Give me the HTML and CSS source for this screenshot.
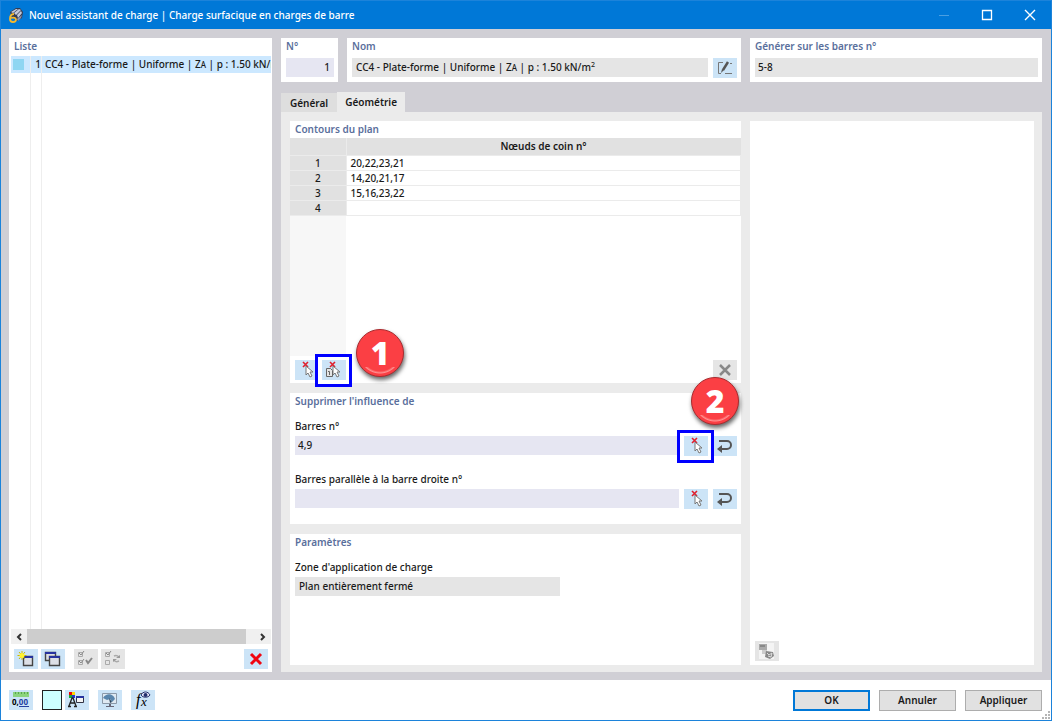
FILE: index.html
```html
<!DOCTYPE html>
<html lang="fr">
<head>
    <meta charset="UTF-8">
    <title>Nouvel assistant de charge</title>
    <link rel="stylesheet" href="styles.css">
</head>
<body>

<!-- shared icons -->
<svg class="defs" width="0" height="0" aria-hidden="true">
    <symbol id="pick" viewBox="0 0 24 20">
        <path d="M8 2l5 5M13 2l-5 5" stroke="#e01f2d" stroke-width="1.6"/>
        <path d="M11 6v9l2-2 2 4 2-1-2-4h3z" fill="#fff" stroke="#777" stroke-width="1"/>
    </symbol>
    <symbol id="back" viewBox="0 0 24 20">
        <path d="M6 5h8a4 4 0 0 1 0 8H6" fill="none" stroke="#555" stroke-width="2"/>
        <path d="M9 9l-5 4 5 4z" fill="#555"/>
    </symbol>
</svg>

<div class="window">
    <header class="titlebar">
        <svg class="logo" width="16" height="16" viewBox="0 0 16 16">
            <path d="M2 5l6-4h4l3 4-1 6-5 3-5-4z" fill="#343b52"/>
            <path d="M3 5l5-3h2L5 6zM6 6l5-4 2 1-5 5zM9 8l4-4 1 2-4 5z" fill="#c3c9da"/>
            <path d="M9 12l5-4-1 3-3 3z" fill="#8b93ad"/>
            <path d="M6 7C3 7 2 9 2 12c0 2 1 3 3 3s3-1 3-2.500S6 10 3 11" fill="none" stroke="#f5b82c" stroke-width="1.800"/>
        </svg>
        <h1>Nouvel assistant de charge | Charge surfacique en charges de barre</h1>
        <div class="caption">
            <button type="button" aria-label="Réduire" disabled><svg width="12" height="12" viewBox="0 0 12 12"><path d="M1 6.500h10" stroke="#4a9fe2"/></svg></button>
            <button type="button" aria-label="Agrandir"><svg width="12" height="12" viewBox="0 0 12 12"><path d="M1.500 1.500h9v9h-9z" fill="none" stroke="#fff" stroke-width="1.300"/></svg></button>
            <button type="button" aria-label="Fermer"><svg width="12" height="12" viewBox="0 0 12 12"><path d="M1 1l10 10M11 1L1 11" stroke="#fff" stroke-width="1.400"/></svg></button>
        </div>
    </header>

    <main class="main">
        <section class="panel list">
            <h2>Liste</h2>
            <div class="rows">
                <div class="row">
                    <span class="mark"></span>
                    <span class="num">1</span>
                    <span class="name">CC4 - Plate-forme | Uniforme | Z<small>A</small> | p : 1.50 kN/m<sup>2</sup></span>
                </div>
                <div class="row empty"><span></span><span></span><span></span></div>
            </div>
            <div class="scroll">
                <button type="button" aria-label="Défiler à gauche"><svg width="8" height="10" viewBox="0 0 8 10"><path d="M6 2L3 5l3 3" fill="none" stroke="#333" stroke-width="2"/></svg></button>
                <div class="thumb"></div>
                <button type="button" aria-label="Défiler à droite"><svg width="8" height="10" viewBox="0 0 8 10"><path d="M2 2l3 3-3 3" fill="none" stroke="#333" stroke-width="2"/></svg></button>
            </div>
            <div class="tools">
                <button type="button" class="tool" aria-label="Nouveau">
                    <svg viewBox="0 0 24 20"><path d="M9.500 7.500h9v9h-9z" fill="#dcdfe6" stroke="#444" stroke-width="1.400"/><path d="M9 7h10v2H9z" fill="#2733a0"/><path d="M8 2v9M3.500 6.500h9M5 3l6 7M11 3l-6 7" stroke="#c9b800" stroke-width="1"/><circle cx="8" cy="6.500" r="2.500" fill="#fff12e"/></svg>
                </button>
                <button type="button" class="tool" aria-label="Copier">
                    <svg viewBox="0 0 24 20"><path d="M4.500 3.500h10v8h-10z" fill="#dcdfe6" stroke="#444" stroke-width="1.400"/><path d="M4 3h11v2H4z" fill="#2733a0"/><path d="M8.500 7.500h10v9h-10z" fill="#dcdfe6" stroke="#444" stroke-width="1.400"/><path d="M8 7h11v2H8z" fill="#2733a0"/></svg>
                </button>
                <button type="button" class="tool gap off" aria-label="Tout sélectionner" disabled>
                    <svg viewBox="0 0 24 20" fill="none" stroke="#aaa"><path d="M4.500 3.500h4v4h-4zM4.500 11.500h4v4h-4z"/><path d="M5 4l2 2 3-4M5 12l2 2 3-4" stroke="#888"/><path d="M12 11l2 3 4-5" stroke="#888" stroke-width="2"/></svg>
                </button>
                <button type="button" class="tool off" aria-label="Inverser la sélection" disabled>
                    <svg viewBox="0 0 24 20" fill="none" stroke="#aaa"><path d="M4.500 3.500h4v4h-4zM4.500 11.500h4v4h-4z"/><path d="M5 4l2 2 3-4" stroke="#888"/><path d="M13 7c2-1 3-1 5 1M18 12c-2 1-4 1-5-1" stroke-width="1.500"/><path d="M19 6v3h-4zM12 13v-3h4z" fill="#999" stroke="none"/></svg>
                </button>
                <button type="button" class="tool last" aria-label="Supprimer">
                    <svg viewBox="0 0 24 20"><path d="M7 5l10 10M17 5L7 15" stroke="#f00510" stroke-width="3"/></svg>
                </button>
            </div>
        </section>

        <div class="detail">
            <div class="fields">
                <section class="panel">
                    <h2><label for="no">N°</label></h2>
                    <div class="line"><input id="no" class="box right" type="text" value="1"></div>
                </section>
                <section class="panel">
                    <h2>Nom</h2>
                    <div class="line">
                        <output class="box grey">CC4 - Plate-forme | Uniforme | Z<small>A</small> | p : 1.50 kN/m<sup>2</sup></output>
                        <button type="button" class="tool" aria-label="Modifier le nom">
                            <svg viewBox="0 0 24 20" fill="none" stroke="#777"><path d="M10 4.500H5.500v11H8M12 15.500h7M17 5.500h2"/><path d="M10 12l5-8" stroke="#555" stroke-width="2.500"/><path d="M8 15l1-4 2 1z" fill="#555" stroke="none"/></svg>
                        </button>
                    </div>
                </section>
                <section class="panel">
                    <h2><label for="members">Générer sur les barres n°</label></h2>
                    <div class="line"><input id="members" class="box grey tight" type="text" value="5-8" readonly></div>
                </section>
            </div>

            <nav class="tabs">
                <button type="button">Général</button>
                <button type="button" class="active">Géométrie</button>
            </nav>

            <div class="page">
                <div class="column">
                    <section class="panel contours">
                        <h2>Contours du plan</h2>
                        <div class="sheet">
                            <table>
                                <thead>
                                    <tr><th></th><th>Nœuds de coin n°</th></tr>
                                </thead>
                                <tbody>
                                    <tr><th>1</th><td>20,22,23,21</td></tr>
                                    <tr><th>2</th><td>14,20,21,17</td></tr>
                                    <tr><th>3</th><td>15,16,23,22</td></tr>
                                    <tr><th>4</th><td></td></tr>
                                </tbody>
                            </table>
                        </div>
                        <div class="tools">
                            <button type="button" class="tool" aria-label="Sélectionner les nœuds"><svg><use href="#pick"/></svg></button>
                            <div class="callout">
                                <button type="button" class="tool" aria-label="Sélectionner plusieurs contours">
                                    <svg viewBox="0 0 24 20"><use href="#pick" width="24" height="20"/><path d="M4.500 8.500h4l2 2v6h-6z" fill="#e4e4e4" stroke="#666"/><path d="M6 11.500h1.500V15" fill="none" stroke="#666"/></svg>
                                </button>
                                <span class="badge beside">1</span>
                            </div>
                            <button type="button" class="tool off last" aria-label="Effacer" disabled>
                                <svg viewBox="0 0 24 20"><path d="M7 5l10 10M17 5L7 15" stroke="#888" stroke-width="2.500"/></svg>
                            </button>
                        </div>
                    </section>

                    <section class="panel influence">
                        <h2>Supprimer l'influence de</h2>
                        <label for="bars">Barres n°</label>
                        <div class="line">
                            <input id="bars" class="box slim" type="text" value="4,9">
                            <div class="callout">
                                <button type="button" class="tool" aria-label="Sélectionner les barres"><svg><use href="#pick"/></svg></button>
                                <span class="badge above">2</span>
                            </div>
                            <button type="button" class="tool" aria-label="Rétablir les barres"><svg><use href="#back"/></svg></button>
                        </div>
                        <label for="parallel">Barres parallèle à la barre droite n°</label>
                        <div class="line">
                            <input id="parallel" class="box slim" type="text">
                            <button type="button" class="tool" aria-label="Sélectionner la barre droite"><svg><use href="#pick"/></svg></button>
                            <button type="button" class="tool" aria-label="Rétablir la barre droite"><svg><use href="#back"/></svg></button>
                        </div>
                    </section>

                    <section class="panel params">
                        <h2>Paramètres</h2>
                        <label for="zone">Zone d'application de charge</label>
                        <div class="line half"><input id="zone" class="box grey" type="text" value="Plan entièrement fermé" readonly></div>
                    </section>
                </div>

                <section class="panel preview">
                    <button type="button" class="tool off" aria-label="Image" disabled>
                        <svg viewBox="0 0 24 20"><path d="M4 2h15v16H4z" fill="#f4f4f4"/><path d="M4 3h8v6H4z" fill="#aaa"/><path d="M5 4h5v2H5z" fill="#888"/><path d="M7 9h5v4H7z" fill="#ccc"/><path d="M11 10l7 1 1 4-4 3-5-2z" fill="#888"/><path d="M12 12l2 2 3-2-1 4-3-1" fill="none" stroke="#ddd"/></svg>
                    </button>
                </section>
            </div>
        </div>
    </main>

    <footer class="footer">
        <button type="button" class="tool" aria-label="Unités">
            <svg viewBox="0 0 24 20"><path d="M4 2h16v5H4z" fill="#8bd47d"/><path d="M6.500 2v2M9.500 2v2M12.500 2v2M15.500 2v2M18.500 2v2" stroke="#5aa650"/><text x="3" y="15" class="tiny">0,<tspan fill="#2440a0">00</tspan></text><path d="M10 16.500h10" stroke="#2440a0"/></svg>
        </button>
        <button type="button" class="swatch" aria-label="Couleur"></button>
        <button type="button" class="tool near" aria-label="Affichage">
            <svg viewBox="0 0 24 20"><path d="M4 2h3v3H4z" fill="#e00"/><path d="M7 2h3v3H7z" fill="#ffd800"/><path d="M4 5h3v3H4z" fill="#1a3"/><path d="M7 5h3v3H7z" fill="#23c"/><path d="M4 16l3-8h1l3 8M5 13h5M3 16.500h3M9 16.500h3" fill="none" stroke="#222" stroke-width="1.300"/><path d="M11.500 6.500h7v6h-7z" fill="#f4f4f4" stroke="#334"/><path d="M11 6h8v2h-8z" fill="#2733a0"/></svg>
        </button>
        <button type="button" class="tool" aria-label="Vue">
            <svg viewBox="0 0 24 20"><path d="M4.500 3.500h14v10h-14z" fill="#dfe9f2" stroke="#8a98a8"/><path d="M5 8c3-5 10-5 12 1l-3 3-2-3-3 1z" fill="#5a86ad"/><path d="M11 8l3 4-2 1z" fill="#29435c"/><path d="M11 14h2v2h-2zM8 16h8v1H8z" fill="#667"/></svg>
        </button>
        <button type="button" class="tool" aria-label="Formule">
            <svg viewBox="0 0 24 20"><text x="5" y="15" class="formula">f</text><text x="10" y="16" class="formula small">x</text><path d="M10 5c2-4 7-4 9 0-2 3-7 3-9 0z" fill="#eef" stroke="#23306e"/><circle cx="14.500" cy="5" r="2" fill="#23306e"/></svg>
        </button>
        <div class="actions">
            <button type="button" class="default">OK</button>
            <button type="button">Annuler</button>
            <button type="button">Appliquer</button>
        </div>
        <svg class="grip" width="8" height="8" viewBox="0 0 8 8"><path d="M6 0h2v2H6zM3 3h2v2H3zM6 3h2v2H6zM0 6h2v2H0zM3 6h2v2H3zM6 6h2v2H6z" fill="#b5b5b5"/></svg>
    </footer>
</div>

</body>
</html>
```
FILE: styles.css
```css
*, *::before {
    box-sizing: border-box;
    margin: 0;
    padding: 0;
}
body {
    font: 500 10px/16px "Noto Sans", "Open Sans", sans-serif;
    color: #1a1a1a;
}
button, input {
    font: inherit;
    color: inherit;
    border: 0;
    border-radius: 0;
}
svg {
    display: block;
}
small {
    font-size: 8px;
}
sup {
    font-size: 7px;
    line-height: 7px;
}
.defs {
    position: absolute;
}
.window {
    display: flex;
    flex-direction: column;
    min-height: 100vh;
    border: 1px solid #1c83da;
    background: #fff;
}

/* title bar */
.titlebar {
    display: flex;
    align-items: center;
    height: 28px;
    padding-left: 7px;
    background: #0078d7;
    color: #fff;
}
.titlebar h1 {
    margin-left: 5px;
    font-size: 10px;
    font-weight: 500;
}
.caption {
    display: flex;
    margin-left: auto;
}
.caption button {
    display: flex;
    align-items: center;
    justify-content: center;
    width: 43px;
    height: 28px;
    background: none;
}

/* layout */
.main {
    flex: 1;
    display: grid;
    grid-template-columns: 263px 1fr;
    gap: 9px;
    padding: 9px 9px 8px 8px;
    background: #d0cfd5;
}
.panel {
    display: flex;
    flex-direction: column;
    min-width: 0;
    padding: 0 4px 0 5px;
    background: #fff;
}
h2 {
    font-size: 10px;
    line-height: 16px;
    font-weight: 600;
    color: #5a6f9c;
}
.tool {
    flex: none;
    width: 24px;
    height: 20px;
    background: #cce4f7;
}
.tool svg {
    width: 24px;
    height: 20px;
}
.off {
    background: #e5e5e5;
}
.tools {
    display: flex;
    gap: 3px;
}
.last {
    margin-left: auto;
}

/* list on the left */
.list {
    padding: 0 0 3px;
}
.list h2 {
    padding: 0 5px 2px;
}
.rows {
    flex: 1;
    display: flex;
    flex-direction: column;
    margin: 0 1px 0 2px;
}
.row {
    display: grid;
    grid-template-columns: 20px 11px 1fr;
    line-height: 17px;
    background: #cce8ff;
}
.row span {
    overflow: hidden;
    white-space: nowrap;
    border-right: 1px solid #eee;
}
.row span:last-child {
    border: 0;
}
.row .mark {
    border-left: 2px solid #cce8ff;
    background: linear-gradient(#8fd6f2, #8fd6f2) 0 3px / 11px 11px no-repeat;
}
.num {
    text-align: right;
}
.name {
    padding-left: 3px;
}
.empty {
    flex: 1;
    background: none;
}
.scroll {
    display: flex;
    height: 15px;
    margin: 0 1px 5px 2px;
    background: #f0f0f0;
}
.scroll button {
    display: flex;
    align-items: center;
    justify-content: center;
    width: 16px;
    background: none;
}
.thumb {
    flex: 1;
    margin-right: 9px;
    background: #cdcdcd;
}
.list .tools {
    padding: 0 4px 0 5px;
}
.gap {
    margin-left: 6px;
}

/* right side */
.detail {
    display: flex;
    flex-direction: column;
    min-width: 0;
}
.fields {
    display: grid;
    grid-template-columns: 57px 1fr 292px;
    gap: 9px;
}
.fields .panel {
    height: 44px;
}
.fields .line {
    margin-top: 4px;
}
.line {
    display: flex;
    gap: 5px;
    height: 20px;
}
.box {
    flex: 1;
    min-width: 0;
    height: 19px;
    padding: 0 4px;
    line-height: 19px;
    white-space: nowrap;
    background: #e6e6f2;
}
.right {
    text-align: right;
}
.grey {
    background: #e5e5e5;
}
.slim, .tight {
    padding: 0 3px;
}
.tabs {
    display: flex;
    align-items: flex-end;
    margin-top: 10px;
}
.tabs button {
    height: 19px;
    padding: 0 9px;
    font-weight: 600;
    background: #dedede;
}
.tabs .active {
    height: 20px;
    padding: 0 8px;
    background: #ebebeb;
}
.page {
    flex: 1;
    display: grid;
    grid-template-columns: 1fr 284px;
    gap: 9px;
    padding: 9px 8px 7px 9px;
    background: #ebebeb;
}
.column {
    display: flex;
    flex-direction: column;
    gap: 10px;
    min-width: 0;
}

/* contours */
.contours {
    flex: 1;
    padding: 0 0 3px;
}
.contours h2 {
    padding: 0 5px 1px;
}
.sheet {
    flex: 1;
    margin-bottom: 4px;
    background: linear-gradient(#f7f7f7, #f7f7f7) 0 0 / 56px 100% no-repeat;
}
table {
    width: 100%;
    table-layout: fixed;
    border-collapse: collapse;
}
th, td {
    height: 15px;
    line-height: 14px;
    border-bottom: 1px solid #ebebeb;
    text-align: left;
}
th {
    font-weight: 500;
    text-align: center;
    background: #e1e1e1;
}
th:first-child {
    width: 56px;
    border-right: 1px solid #ebebeb;
}
thead th {
    height: 17px;
    line-height: 16px;
    font-weight: 600;
}
td {
    padding-left: 4px;
    border-right: 1px solid #ebebeb;
}
.contours .tools {
    padding: 0 4px 0 5px;
}

/* fields under the table */
.influence, .params {
    height: 131px;
}
.influence > label, .params > label {
    margin-top: 9px;
}
.influence .line, .params .line {
    margin-top: 2px;
}
.influence .line + label {
    margin-top: 15px;
}
.half {
    width: 265px;
}
.preview {
    justify-content: flex-end;
    padding-bottom: 4px;
}

/* numbered steps */
.callout {
    position: relative;
    width: 24px;
    height: 20px;
}
.callout::before {
    content: "";
    position: absolute;
    z-index: 1;
    left: -7px;
    top: -6px;
    width: 37px;
    height: 33px;
    border: 3px solid #00f;
    box-shadow: inset 0 0 0 3px #fff;
}
.callout .tool {
    position: relative;
    z-index: 2;
}
.badge {
    position: absolute;
    z-index: 3;
    width: 48px;
    height: 48px;
    border: 1px solid #a92b2f;
    border-radius: 50%;
    background: radial-gradient(circle at 50% -14px, transparent 18px, #ff9090 20px, transparent 21px) 0 37px / 100% 8px no-repeat, #fb3f44;
    box-shadow: 1px 3px 4px rgba(0, 0, 0, .6);
    color: #fff;
    font: 800 32px/46px "Open Sans", sans-serif;
    text-align: center;
}
.beside {
    left: 34px;
    top: -31px;
}
.above {
    left: 7px;
    top: -59px;
}

/* footer */
.footer {
    position: relative;
    display: flex;
    align-items: center;
    gap: 9px;
    height: 40px;
    padding: 0 9px 0 8px;
}
.swatch {
    width: 20px;
    height: 20px;
    border: 1px solid #222;
    background: #ccffff;
}
.near {
    margin-left: -6px;
}
.actions {
    display: flex;
    gap: 9px;
    margin-left: auto;
}
.actions button {
    width: 77px;
    height: 21px;
    border: 1px solid #adadad;
    background: #e1e1e1;
    font-weight: 600;
}
.actions .default {
    border: 2px solid #0078d7;
}
.grip {
    position: absolute;
    right: 1px;
    bottom: 1px;
}
.tiny {
    font-size: 8px;
    font-weight: 700;
}
.formula {
    font: italic 400 16px "Liberation Serif", serif;
}
.formula.small {
    font-size: 13px;
}
```
